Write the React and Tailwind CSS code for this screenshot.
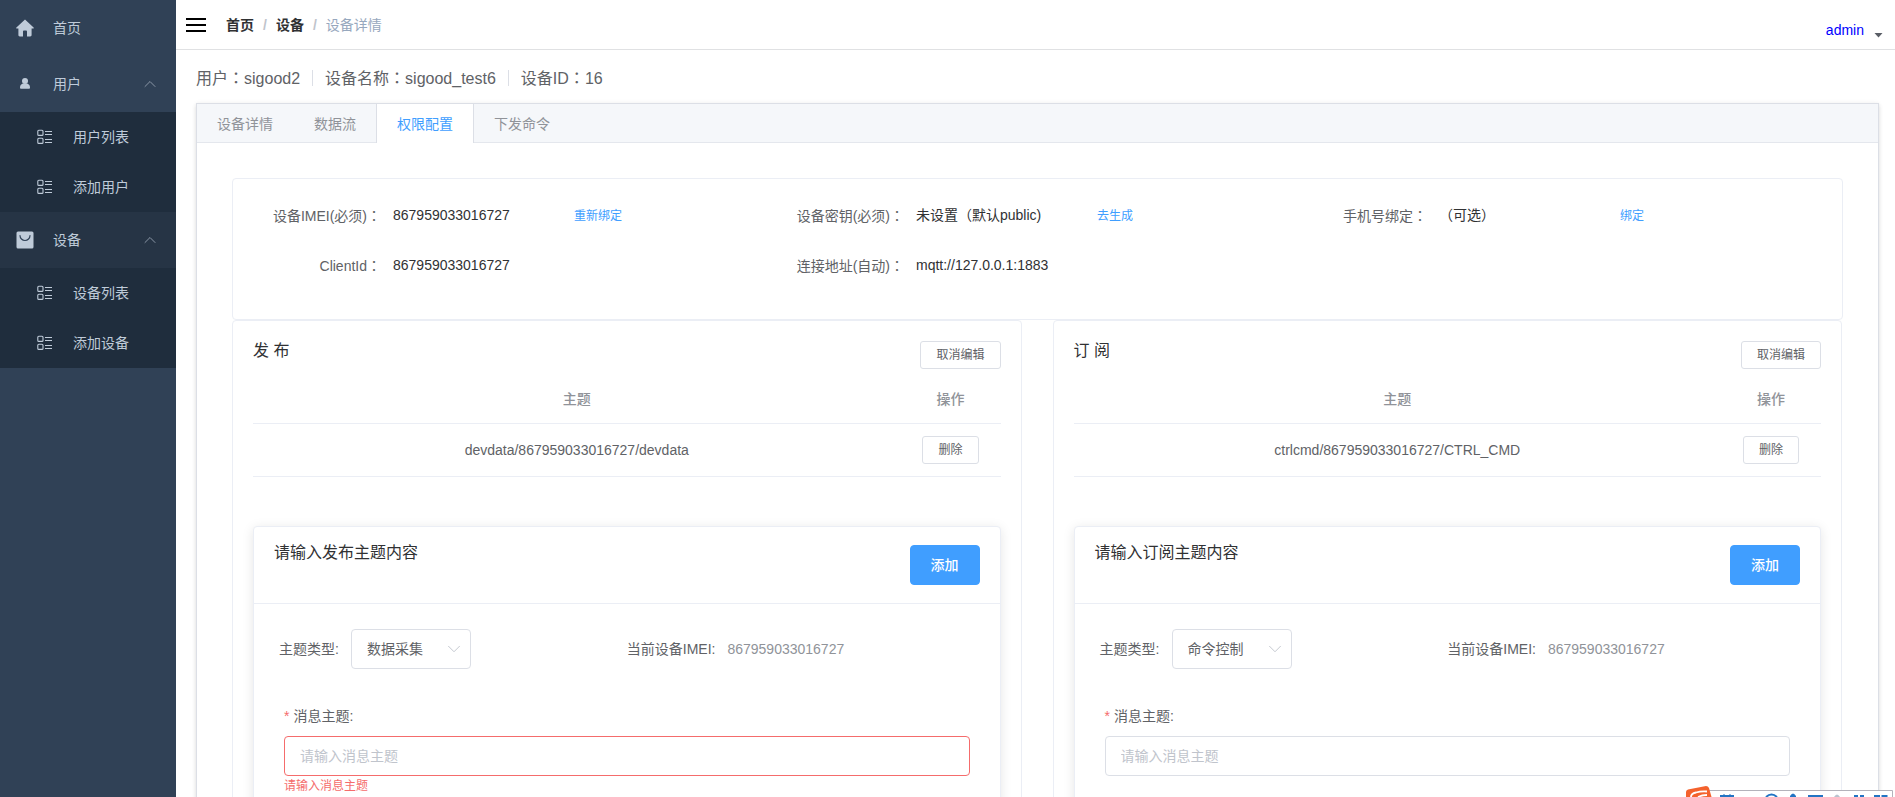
import { useState } from "react";
import { ChevronDown, ChevronUp } from "lucide-react";

const menus = [
  {
    title: "用户",
    icon: "user",
    bg: "bg-[#304156]",
    items: ["用户列表", "添加用户"],
  },
  {
    title: "设备",
    icon: "bag",
    bg: "bg-[#263445]",
    items: ["设备列表", "添加设备"],
  },
];

const tabs = ["设备详情", "数据流", "权限配置", "下发命令"];

const infoRows = [
  [
    { label: "设备IMEI(必须)", value: "867959033016727", action: "重新绑定" },
    { label: "设备密钥(必须)", value: "未设置（默认public)", action: "去生成" },
    { label: "手机号绑定", value: "（可选）", action: "绑定" },
  ],
  [
    { label: "ClientId", value: "867959033016727" },
    { label: "连接地址(自动)", value: "mqtt://127.0.0.1:1883" },
  ],
];

const HomeIcon = () => (
  <svg width="18" height="18" viewBox="0 0 18 18" fill="currentColor">
    <path d="M9 .4 17.6 8.6c.4.5.2 1-.4 1H15.600V16c0 .9-.5 1.400-1.400 1.400H11V12.500c0-.6-.3-.9-.9-.9H7.900c-.6 0-.9.3-.9.9v4.900H3.800c-.9 0-1.400-.5-1.400-1.400V9.600H.8c-.6 0-.8-.5-.4-1z" />
  </svg>
);

const UserIcon = () => (
  <svg width="18" height="18" viewBox="0 0 18 18" fill="currentColor">
    <circle cx="9" cy="6" r="3" />
    <path d="M6.800 8.400h4.400c1.900.7 2.800 2.200 2.800 4.100 0 .9-.4 1.300-1.200 1.300H5.200c-.8 0-1.200-.4-1.200-1.300 0-1.900.9-3.400 2.800-4.100z" />
  </svg>
);

const BagIcon = () => (
  <svg width="18" height="18" viewBox="0 0 18 18">
    <rect x=".5" y=".5" width="17" height="17" rx="1.500" fill="currentColor" />
    <path
      d="M4 4.500a5 5 0 0 0 10 0"
      fill="none"
      stroke="#304156"
      strokeWidth="1.200"
      strokeLinecap="round"
    />
  </svg>
);

const ListIcon = () => (
  <svg
    width="16"
    height="16"
    viewBox="0 0 16 16"
    fill="none"
    stroke="currentColor"
    strokeWidth="1.100"
  >
    <rect x=".8" y="1.200" width="5.200" height="5.200" rx="1" />
    <rect x=".8" y="9.200" width="5.200" height="5.200" rx="1" />
    <path d="M8 2.500H15M8 5.500H15M8 10.500H15M8 13.500H15" />
  </svg>
);

// full-width colon centred in its box
const Colon = () => <span className="font-['Noto_Sans_CJK_TC']">：</span>;

const Sidebar = () => (
  <aside className="w-44 shrink-0 bg-[#304156] text-sm text-[#bfcbd9]">
    <a href="#home" className="flex h-14 items-center gap-[19px] px-4">
      <HomeIcon />
      首页
    </a>
    {menus.map((menu) => (
      <div key={menu.title}>
        <button
          type="button"
          className={`flex h-14 w-full items-center gap-[19px] px-4 ${menu.bg}`}
        >
          {menu.icon === "user" ? <UserIcon /> : <BagIcon />}
          {menu.title}
          <ChevronUp
            size={20}
            strokeWidth={1.2}
            className="ml-auto text-[#8a96a6]"
          />
        </button>
        <nav className="bg-[#1f2d3d]">
          {menu.items.map((item) => (
            <a
              key={item}
              href="#menu"
              className="flex h-[50px] items-center gap-5 pl-[37px]"
            >
              <ListIcon />
              {item}
            </a>
          ))}
        </nav>
      </div>
    ))}
  </aside>
);

const Header = () => (
  <header className="flex h-[50px] items-center border-b border-[#e0e1e3] pl-2.5">
    <button type="button" aria-label="菜单" className="text-black">
      <svg
        width="20"
        height="16"
        viewBox="0 0 20 16"
        stroke="currentColor"
        strokeWidth="2"
      >
        <path d="M0 2H20M0 8H20M0 14H20" />
      </svg>
    </button>
    <nav className="ml-5 flex items-center gap-[9px] text-sm text-[#c0c4cc]">
      <a href="#home" className="font-bold text-[#303133]">
        首页
      </a>
      <span className="font-bold">/</span>
      <a href="#device" className="font-bold text-[#303133]">
        设备
      </a>
      <span className="font-bold">/</span>
      <span className="text-[#97a8be]">设备详情</span>
    </nav>
    <button
      type="button"
      className="mt-2.5 mr-3 ml-auto flex items-center gap-2.5 text-sm text-[#0000ff]"
    >
      admin
      <svg width="9" height="5" viewBox="0 0 9 5" className="mt-3">
        <path d="M.5 0H8.500L4.500 4.500z" fill="#5a5e66" />
      </svg>
    </button>
  </header>
);

const InfoBox = () => (
  <div className="rounded border border-[#ebeef5] px-5 pt-[11px] pb-[29px]">
    {infoRows.map((row, i) => (
      <dl key={i} className="grid h-[50px] grid-cols-3 items-center text-sm">
        {row.map((item) => (
          <div key={item.label} className="flex items-center">
            <dt className="w-[140px] shrink-0 pr-3 text-right text-[#606266]">
              {item.label}
              <Colon />
            </dt>
            <dd className="w-[181px] text-[#303133]">{item.value}</dd>
            {item.action && (
              <dd>
                <button type="button" className="text-xs text-[#409eff]">
                  {item.action}
                </button>
              </dd>
            )}
          </div>
        ))}
      </dl>
    ))}
  </div>
);

const TopicForm = ({ id, title, types, imei, error }) => {
  const [type, setType] = useState(types[0]);
  const [topic, setTopic] = useState("");

  return (
    <div className="mt-[49px] rounded border border-[#ebeef5] bg-white shadow-[0_2px_12px_0_rgba(0,0,0,0.1)]">
      <div className="flex items-start justify-between border-b border-[#ebeef5] px-5 py-[18px]">
        <h4 className="text-base leading-4 text-[#303133]">{title}</h4>
        <button
          type="button"
          className="h-10 rounded border border-[#409eff] bg-[#409eff] px-5 text-sm font-medium text-white"
        >
          添加
        </button>
      </div>
      <form className="px-5 pt-[25px] pb-24 text-sm text-[#606266]">
        <div className="grid grid-cols-2 items-center">
          <div className="flex items-center">
            <label htmlFor={`${id}-type`} className="w-[77px] pr-3 text-right">
              主题类型:
            </label>
            <div className="relative">
              <select
                id={`${id}-type`}
                value={type}
                onChange={(e) => setType(e.target.value)}
                className="h-10 w-[120px] appearance-none rounded border border-[#dcdfe6] bg-white px-[15px]"
              >
                {types.map((t) => (
                  <option key={t}>{t}</option>
                ))}
              </select>
              <ChevronDown
                size={22}
                strokeWidth={1}
                className="pointer-events-none absolute top-[9px] right-1.5 text-[#c0c4cc]"
              />
            </div>
          </div>
          <div className="flex items-center gap-3">
            <span>当前设备IMEI:</span>
            <span className="text-[#909399]">{imei}</span>
          </div>
        </div>
        <div className="mt-9 px-2.5">
          <label htmlFor={`${id}-topic`} className="block pb-2 leading-[23px]">
            <span className="mr-1 text-[#f56c6c]">*</span>
            消息主题:
          </label>
          <input
            id={`${id}-topic`}
            type="text"
            value={topic}
            onChange={(e) => setTopic(e.target.value)}
            placeholder="请输入消息主题"
            className={`block h-10 w-full rounded border px-[15px] placeholder:text-[#c0c4cc] ${
              error ? "border-[#f56c6c]" : "border-[#dcdfe6]"
            }`}
          />
          {error && (
            <p className="pt-1 text-xs leading-3 text-[#f56c6c]">{error}</p>
          )}
        </div>
      </form>
    </div>
  );
};

const TopicPanel = ({ heading, topic, ...form }) => (
  <section className="rounded border border-[#ebeef5] p-5">
    <div className="flex items-start justify-between">
      <h3 className="text-base leading-5 text-[#303133]">{heading}</h3>
      <button
        type="button"
        className="h-7 rounded-[3px] border border-[#dcdfe6] px-[15px] text-xs text-[#606266]"
      >
        取消编辑
      </button>
    </div>
    <table className="mt-1.5 w-full table-fixed text-center text-sm">
      <thead>
        <tr className="h-12 border-b border-[#ebeef5] text-[#909399]">
          <th className="font-medium">主题</th>
          <th className="w-[100px] font-medium">操作</th>
        </tr>
      </thead>
      <tbody>
        <tr className="h-[53px] border-b border-[#ebeef5] text-[#606266]">
          <td>{topic}</td>
          <td>
            <button
              type="button"
              className="h-7 rounded-[3px] border border-[#dcdfe6] px-[15px] text-xs"
            >
              删除
            </button>
          </td>
        </tr>
      </tbody>
    </table>
    <TopicForm {...form} />
  </section>
);

// input method bar docked to the bottom edge of the desktop
const InputBar = () => (
  <div className="fixed right-0 bottom-0">
    <svg width="210" height="11" viewBox="0 0 210 11" className="block">
      <path d="M20 11V4.500H207.500V11" fill="#fff" stroke="#b3b3bb" />
      <path d="M1 6Q1 4 3 3.500L21 0Q23 0 24 2L26.500 11H1z" fill="#f4622d" />
      <path
        d="M6 11Q6 7.500 11 6.500 16 5 22 5.500M13 11Q17 9 22 9"
        fill="none"
        stroke="#fff"
        strokeWidth="1.800"
      />
      <g fill="none" stroke="#2274c4" strokeWidth="2">
        <path d="M35 10H49M39 8.500V11M45 8.500V11" />
        <path d="M81 11Q86.500 6 92 11" />
        <path d="M123 10H138" />
        <path d="M169 10H173M175 10H179" />
        <path d="M189 10H195M196.500 10H202.500" />
      </g>
      <path d="M105 11V10Q108 5 111 10V11z" fill="#2274c4" />
      <path d="M149 11Q152 6 155 11z" fill="#b9c3cf" />
    </svg>
  </div>
);

export default function App() {
  const [active, setActive] = useState("权限配置");

  return (
    <div className="flex h-screen overflow-hidden bg-white font-['Liberation_Sans','Noto_Sans_CJK_SC',sans-serif]">
      <Sidebar />
      <div className="min-w-0 flex-1">
        <Header />
        <main className="pt-4 pr-4 pl-5">
          <div className="flex h-6 items-center gap-3 text-base text-[#606266]">
            <span>
              用户
              <Colon />
              sigood2
            </span>
            <span className="h-4 w-px bg-[#dcdfe6]" />
            <span>
              设备名称
              <Colon />
              sigood_test6
            </span>
            <span className="h-4 w-px bg-[#dcdfe6]" />
            <span>
              设备ID
              <Colon />
              16
            </span>
          </div>

          <div className="mt-[13px] border border-[#dcdfe6] bg-white shadow-[0_2px_4px_0_rgba(0,0,0,0.12),0_0_6px_0_rgba(0,0,0,0.04)]">
            <div className="flex border-b border-[#e4e7ed] bg-[#f5f7fa]">
              {tabs.map((tab) => (
                <button
                  key={tab}
                  type="button"
                  onClick={() => setActive(tab)}
                  className={`-mb-px -ml-px h-[39px] border-x px-5 text-sm ${
                    tab === active
                      ? "border-[#dcdfe6] bg-white text-[#409eff]"
                      : "border-transparent text-[#909399]"
                  }`}
                >
                  {tab}
                </button>
              ))}
            </div>

            <div className="p-[35px]">
              <InfoBox />
              <div className="grid grid-cols-2 gap-[31px] pr-px">
                <TopicPanel
                  id="pub"
                  heading="发 布"
                  topic="devdata/867959033016727/devdata"
                  title="请输入发布主题内容"
                  types={["数据采集", "命令控制"]}
                  imei="867959033016727"
                  error="请输入消息主题"
                />
                <TopicPanel
                  id="sub"
                  heading="订 阅"
                  topic="ctrlcmd/867959033016727/CTRL_CMD"
                  title="请输入订阅主题内容"
                  types={["命令控制", "数据采集"]}
                  imei="867959033016727"
                />
              </div>
            </div>
          </div>
        </main>
      </div>
      <InputBar />
    </div>
  );
}
